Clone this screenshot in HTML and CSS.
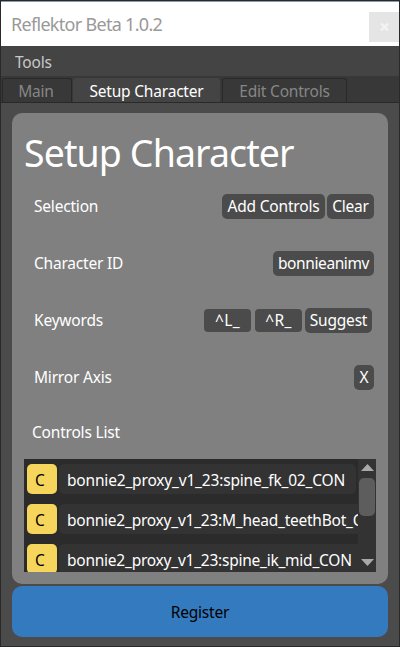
FILE: index.html
```html
<!DOCTYPE html>
<html lang="en">
<head>
<meta charset="utf-8">
<title>Reflektor Beta 1.0.2</title>
<link rel="stylesheet" href="styles.css">
</head>
<body>
<div class="window">
  <header class="titlebar">
    <span class="title">Reflektor Beta 1.0.2</span>
    <button class="close" aria-label="Close"><svg width="9" height="8" viewBox="0 0 9 8"><path d="M1 .5 8 7.5M8 .5 1 7.5" stroke="#f3f3f3" stroke-width="2.4"/></svg></button>
  </header>
  <nav class="menubar"><span class="menu">Tools</span></nav>
  <div class="tabs">
    <div class="tab tab-main"><span>Main</span></div>
    <div class="tab tab-setup active"><span>Setup Character</span></div>
    <div class="tab tab-edit"><span>Edit Controls</span></div>
  </div>
  <main class="content">
    <section class="panel">
      <h1>Setup Character</h1>
      <div class="row"><span class="label">Selection</span><div class="buttons"><button class="btn b-add">Add Controls</button><button class="btn b-clear">Clear</button></div></div>
      <div class="row"><span class="label">Character ID</span><div class="buttons"><button class="btn b-id">bonnieanimv</button></div></div>
      <div class="row"><span class="label">Keywords</span><div class="buttons keywords"><span class="btn field">^L_</span><span class="btn field">^R_</span><button class="btn b-suggest">Suggest</button></div></div>
      <div class="row"><span class="label">Mirror Axis</span><div class="buttons"><button class="btn b-axis">X</button></div></div>
      <div class="list-title">Controls List</div>
      <div class="list">
        <div class="items">
          <div class="item"><span class="chip">C</span><span class="name">bonnie2_proxy_v1_23:spine_fk_02_CON</span></div>
          <div class="item"><span class="chip">C</span><span class="name wide">bonnie2_proxy_v1_23:M_head_teethBot_CON</span></div>
          <div class="item"><span class="chip">C</span><span class="name wide">bonnie2_proxy_v1_23:spine_ik_mid_CON</span></div>
        </div>
        <div class="scrollbar">
          <svg width="13" height="7" viewBox="0 0 13 7"><path d="M6.5 0 13 7H0z" fill="#a9a9a9"/></svg>
          <div class="thumb"></div>
          <svg class="down" width="13" height="7" viewBox="0 0 13 7"><path d="M0 0H13L6.5 7z" fill="#a9a9a9"/></svg>
        </div>
      </div>
    </section>
    <button class="register">Register</button>
  </main>
</div>
</body>
</html>
```
FILE: styles.css
```css
* { box-sizing: border-box; }
body { margin: 0; font: 15.5px/22px "Noto Sans", "Open Sans", sans-serif; letter-spacing: -0.2px; color: #fff; }
button { font: inherit; letter-spacing: inherit; color: inherit; border: 0; padding: 0; }
.window { width: 400px; height: 647px; background: #4b4b4b; border: 1px solid #292929; overflow: hidden; white-space: nowrap; }
.titlebar { height: 45px; background: #fff; border-top: 1px solid #8d99aa; display: flex; justify-content: space-between; padding-left: 10px; }
.title { font-size: 18px; line-height: 45px; letter-spacing: -0.7px; color: #999; }
.close { width: 30px; height: 30px; margin-top: 10px; background: #e5e5e5; display: grid; place-items: center; }
.menubar { height: 30px; background: #444; padding: 5px 14px; color: #c8c8c8; }
.tabs { height: 27px; background: #383838; border-bottom: 1px solid #292929; display: flex; padding: 2px 0 0 1px; }
.tab { height: 24px; border: 1px solid #292929; border-bottom: 0; border-radius: 3px 3px 0 0; color: #868686; display: flex; justify-content: center; line-height: 25px; }
.tab-main { width: 70px; padding-right: 2px; }
.tab-setup { width: 147px; margin-left: 1px; }
.tab-edit { width: 125px; margin-left: 2px; }
.tab.active { background: #444; border-color: #444; color: #fff; }
.content { padding: 10px 11px; display: flex; flex-direction: column; gap: 2px; }
.panel { height: 471px; background: #808080; border-radius: 10px; padding: 12px; }
h1 { margin: 0; height: 53px; font-size: 37.5px; line-height: 55px; font-weight: 400; letter-spacing: -0.9px; }
.row { height: 57px; display: flex; align-items: center; justify-content: space-between; padding: 0 2px 0 10px; }
.label { margin-bottom: 1px; }
.buttons { display: flex; align-items: center; gap: 2px; }
.keywords { gap: 4px; padding-right: 2px; }
.btn { height: 25px; background: #4b4b4b; border-radius: 5px; text-align: center; line-height: 25px; }
.field { width: 47px; height: 23px; line-height: 23px; border-radius: 4px; letter-spacing: 0.4px; }
.keywords .b-suggest { margin-left: -1px; width: 67px; }
.b-add { width: 103px; }
.b-clear { width: 47px; }
.b-id { width: 101px; letter-spacing: -0.4px; }
.b-axis { width: 20px; }
.list-title { height: 53px; padding-left: 8px; line-height: 53px; }
.list { height: 113px; background: #2b2b2b; display: flex; overflow: hidden; }
.items { width: 334px; padding: 5px 0 0 3px; overflow: hidden; }
.item { height: 30px; margin-bottom: 10px; display: flex; gap: 2px; }
.chip { width: 30px; height: 30px; flex: none; background: #f6d55c; color: #000; border-radius: 5px; line-height: 33px; padding-left: 8px; }
.name { width: 297px; flex: none; background: #333; border-radius: 5px; padding-left: 8px; line-height: 33px; letter-spacing: -0.18px; }
.name.wide { width: 340px; letter-spacing: -0.24px; }
.scrollbar { width: 18px; background: #333; display: flex; flex-direction: column; align-items: center; padding: 5px 0 6px; }
.thumb { width: 16px; height: 38px; margin-top: 7px; background: #5d5d5d; border-radius: 5px; }
.down { margin-top: auto; }
.register { height: 51px; border-radius: 10px; background: #347abf; color: #000; line-height: 53px; }
```
